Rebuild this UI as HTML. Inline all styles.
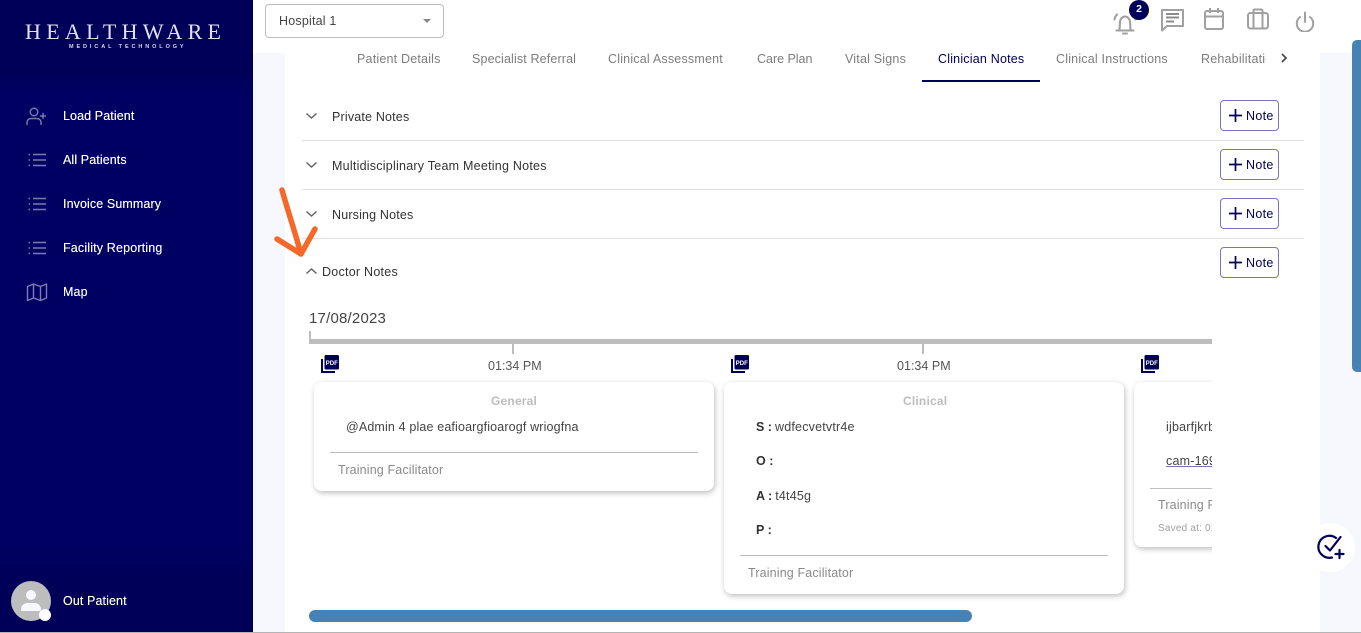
<!DOCTYPE html>
<html><head><meta charset="utf-8"><title>Healthware</title>
<style>
html,body{margin:0;padding:0;width:1361px;height:633px;overflow:hidden;background:#f7f8fd}
body{position:relative;font-family:"Liberation Sans",sans-serif;color:#333}
.a{position:absolute}
.t{position:absolute;white-space:nowrap;font-size:12.5px;line-height:16px;letter-spacing:.2px}
.side{color:#fff;left:63px;font-weight:400;font-size:12.5px;letter-spacing:.1px;text-shadow:0 0 .3px #fff}
.tab{top:51px;color:#7d7d7d}
.hr{position:absolute;left:302px;width:1002px;height:1px;background:#e0e0e0}
.btn{position:absolute;left:1220px;width:57px;height:29px;border:1px solid #7b74b8;border-radius:4px;background:#fff}
.btn span{position:absolute;left:25px;top:7px;font-size:12.5px;line-height:16px;color:#000058;letter-spacing:.3px}
.btn svg{position:absolute;left:8px;top:8px}
.lab{color:#333;letter-spacing:.2px}
.card{position:absolute;background:#fff;border-radius:8px;box-shadow:1px 2px 6px rgba(0,0,0,.26)}
.ct{color:#bdbdbd;font-weight:700;font-size:12px}
.ln{position:absolute;height:1px;background:#bdbdbd}
.gr{color:#8a8a8a;letter-spacing:.15px}
b{letter-spacing:0}
</style></head><body>
<div class="a" style="left:285px;top:53px;width:1035px;height:580px;background:#fff"></div>

<div class="a" style="left:0;top:0;width:253px;height:633px;background:linear-gradient(#000058 0,#000058 70px,#000062 95px,#000062 545px,#000058 580px)"></div>
<div class="t" style="left:25px;top:20px;color:#e2e2f0;font-family:'Liberation Serif',serif;font-size:22px;line-height:24px;letter-spacing:5.3px">HEALTHWARE</div>
<div class="t" style="left:69px;top:44px;color:#d8d8e8;font-size:5.500px;line-height:7px;letter-spacing:2.900px;font-weight:700">MEDICAL TECHNOLOGY</div>

<svg class="a" style="left:26px;top:107px" width="22" height="19" viewBox="0 0 22 19" fill="none" stroke="#7d7cb0" stroke-width="1.400" stroke-linecap="round"><circle cx="8" cy="5" r="3.800"/><path d="M1 17.500v-2.200c0-2.200 1.800-3.800 4-3.800h6c2.200 0 4 1.600 4 3.800v2.200M17 6.500v5M14.500 9h5"/></svg>
<svg class="a" style="left:28px;top:153px" width="19" height="14" viewBox="0 0 19 14" fill="none" stroke="#7d7cb0" stroke-width="1.400"><path d="M5 1.500h13M5 7h13M5 12.500h13"/><path d="M.5 1.500h1.500M.5 7h1.500M.5 12.500h1.500"/></svg>
<svg class="a" style="left:28px;top:197px" width="19" height="14" viewBox="0 0 19 14" fill="none" stroke="#7d7cb0" stroke-width="1.400"><path d="M5 1.500h13M5 7h13M5 12.500h13"/><path d="M.5 1.500h1.500M.5 7h1.500M.5 12.500h1.500"/></svg>
<svg class="a" style="left:28px;top:241px" width="19" height="14" viewBox="0 0 19 14" fill="none" stroke="#7d7cb0" stroke-width="1.400"><path d="M5 1.500h13M5 7h13M5 12.500h13"/><path d="M.5 1.500h1.500M.5 7h1.500M.5 12.500h1.500"/></svg>
<svg class="a" style="left:26px;top:282px" width="22" height="20" viewBox="0 0 22 20" fill="none" stroke="#7d7cb0" stroke-width="1.400" stroke-linejoin="round"><path d="M1.500 4.500l6-2.500 7 2.500 6-2.500v14l-6 2.500-7-2.500-6 2.500zM7.500 2v14M14.500 4.500v14"/></svg>

<div class="t side" style="top:108px">Load Patient</div>
<div class="t side" style="top:152px">All Patients</div>
<div class="t side" style="top:196px">Invoice Summary</div>
<div class="t side" style="top:240px;letter-spacing:.16px">Facility Reporting</div>
<div class="t side" style="top:284px">Map</div>

<div class="a" style="left:11px;top:581px;width:40px;height:40px;border-radius:50%;background:#bdbdbd;overflow:hidden">
<div class="a" style="left:15px;top:9px;width:10px;height:10px;border-radius:50%;background:#f7f8fd"></div>
<div class="a" style="left:10px;top:22px;width:20px;height:8px;border-radius:8px 8px 2px 2px;background:#f7f8fd"></div></div>
<div class="a" style="left:39px;top:609px;width:12px;height:12px;border-radius:50%;background:#fff"></div>
<div class="t side" style="top:593px">Out Patient</div>

<div class="a" style="left:253px;top:0;width:1108px;height:53px;background:#fff"></div>
<div class="a" style="left:265px;top:4px;width:177px;height:32px;border:1px solid #bdbdbd;border-radius:4px;background:#fff"></div>
<div class="t" style="left:279px;top:13px;color:#444">Hospital 1</div>
<div class="a" style="left:423px;top:19px;width:0;height:0;border-left:4.500px solid transparent;border-right:4.500px solid transparent;border-top:4.500px solid #858585"></div>

<svg class="a" style="left:1112px;top:11px" width="26" height="25" viewBox="0 0 26 25" fill="none" stroke="#a0a0a0" stroke-width="2.100" stroke-linecap="round" stroke-linejoin="round"><path d="M4.500 19.500h17M7.500 19.500l.5-8.500c.2-3 2.200-5.500 5-5.500s4.800 2.500 5 5.500l.5 8.500M11 22.500h4M5 3.500C3.500 5 2.700 6.500 2.500 8.500M21 3.500c1.500 1.500 2.300 3 2.500 5"/></svg>
<div class="a" style="left:1129px;top:0;width:20px;height:20px;border-radius:50%;background:#000058;color:#fff;font-size:10.500px;font-weight:700;line-height:19px;text-align:center">2</div>
<svg class="a" style="left:1160px;top:8px" width="25" height="24" viewBox="0 0 25 24" fill="none" stroke="#a0a0a0" stroke-width="2" stroke-linejoin="round"><path d="M2 2h21v16H7l-5 4.500z"/><path d="M6 6h13M6 9.500h13M6 13.500h8" stroke="#8c8c8c"/></svg>
<svg class="a" style="left:1203px;top:7px" width="22" height="23" viewBox="0 0 22 23" fill="none" stroke="#a0a0a0" stroke-width="2" stroke-linejoin="round"><rect x="2" y="4" width="18" height="18" rx="2"/><path d="M2 9.500h18M7 1v5M15 1v5"/></svg>
<svg class="a" style="left:1246px;top:8px" width="24" height="22" viewBox="0 0 24 22" fill="none" stroke="#a0a0a0" stroke-width="2" stroke-linejoin="round"><rect x="2" y="5" width="20" height="15.500" rx="2.500"/><path d="M7.500 20.500V3c0-.8.5-1.500 1.500-1.500h6c1 0 1.500.7 1.500 1.500v17.500"/></svg>
<svg class="a" style="left:1295px;top:11px" width="20" height="21" viewBox="0 0 20 21" fill="none" stroke="#a0a0a0" stroke-width="2" stroke-linecap="round"><path d="M10 1.500v9.500M5 6a8.200 8.200 0 1 0 10 0"/></svg>

<div class="t tab" style="left:357px">Patient Details</div>
<div class="t tab" style="left:472px;letter-spacing:.14px">Specialist Referral</div>
<div class="t tab" style="left:608px">Clinical Assessment</div>
<div class="t tab" style="left:757px;letter-spacing:-.02px">Care Plan</div>
<div class="t tab" style="left:845px">Vital Signs</div>
<div class="t tab" style="left:938px;color:#000058">Clinician Notes</div>
<div class="t tab" style="left:1056px">Clinical Instructions</div>
<div class="a" style="left:1201px;top:51px;width:65px;height:16px;overflow:hidden"><div class="t tab" style="left:0;top:0">Rehabilitation</div></div>
<svg class="a" style="left:1279px;top:52px" width="10" height="12" viewBox="0 0 10 12" fill="none" stroke="#444" stroke-width="1.600"><path d="M3 2l4 4-4 4"/></svg>
<div class="a" style="left:922px;top:80px;width:118px;height:2px;background:#000058"></div>

<svg class="a" style="left:305px;top:112px" width="13" height="8" viewBox="0 0 13 8" fill="none" stroke="#666" stroke-width="1.500"><path d="M1.500 1.500l5 4.500 5-4.500"/></svg>
<div class="t lab" style="left:332px;top:109px;letter-spacing:.18px">Private Notes</div>
<div class="btn" style="top:100px"><svg width="13" height="13" viewBox="0 0 13 13" stroke="#000058" stroke-width="1.700"><path d="M6.500 0v13M0 6.500h13"/></svg><span>Note</span></div>
<div class="hr" style="top:140px"></div>

<svg class="a" style="left:305px;top:161px" width="13" height="8" viewBox="0 0 13 8" fill="none" stroke="#666" stroke-width="1.500"><path d="M1.500 1.500l5 4.500 5-4.500"/></svg>
<div class="t lab" style="left:332px;top:158px;letter-spacing:.24px">Multidisciplinary Team Meeting Notes</div>
<div class="btn" style="top:149px"><svg width="13" height="13" viewBox="0 0 13 13" stroke="#000058" stroke-width="1.700"><path d="M6.500 0v13M0 6.500h13"/></svg><span>Note</span></div>
<div class="hr" style="top:189px"></div>

<svg class="a" style="left:305px;top:210px" width="13" height="8" viewBox="0 0 13 8" fill="none" stroke="#666" stroke-width="1.500"><path d="M1.500 1.500l5 4.500 5-4.500"/></svg>
<div class="t lab" style="left:332px;top:207px;letter-spacing:.17px">Nursing Notes</div>
<div class="btn" style="top:198px"><svg width="13" height="13" viewBox="0 0 13 13" stroke="#000058" stroke-width="1.700"><path d="M6.500 0v13M0 6.500h13"/></svg><span>Note</span></div>
<div class="hr" style="top:238px"></div>

<svg class="a" style="left:305px;top:267px" width="13" height="8" viewBox="0 0 13 8" fill="none" stroke="#666" stroke-width="1.500"><path d="M1.500 6.500l5-4.500 5 4.500"/></svg>
<div class="t lab" style="left:322px;top:264px;letter-spacing:.25px">Doctor Notes</div>
<div class="btn" style="top:247px"><svg width="13" height="13" viewBox="0 0 13 13" stroke="#000058" stroke-width="1.700"><path d="M6.500 0v13M0 6.500h13"/></svg><span>Note</span></div>

<svg class="a" style="left:270px;top:185px" width="55" height="75" viewBox="0 0 55 75" fill="none" stroke="#f4682a" stroke-width="5.500" stroke-linecap="round" stroke-linejoin="round"><path d="M12 5c5 18 13 42 19 64M7 54l24 15 14-25"/></svg>

<div class="t" style="left:309px;top:310px;font-size:15px;line-height:18px;letter-spacing:.2px;color:#444">17/08/2023</div>

<div class="a" style="left:309px;top:331px;width:903px;height:302px;overflow:hidden">
  <div class="a" style="left:0;top:8px;width:903px;height:5px;background:#bdbdbd"></div>
  <div class="a" style="left:0;top:0;width:2px;height:10px;background:#bdbdbd"></div>
  <div class="a" style="left:203px;top:13px;width:2px;height:10px;background:#bdbdbd"></div>
  <div class="a" style="left:613px;top:13px;width:2px;height:10px;background:#bdbdbd"></div>
  <div class="t" style="left:179px;top:27px;color:#555;letter-spacing:.02px">01:34 PM</div>
  <div class="t" style="left:588px;top:27px;color:#555;letter-spacing:.02px">01:34 PM</div>

  <svg class="a" style="left:12px;top:24px" width="18" height="18" viewBox="0 0 18 18"><rect x="3.500" y="0" width="14.500" height="14.500" rx="1.500" fill="#000058"/><path d="M1 4v13h13" fill="none" stroke="#000058" stroke-width="2"/><text x="10.800" y="9.800" font-family="Liberation Sans" font-size="6" font-weight="700" fill="#fff" text-anchor="middle">PDF</text></svg>
  <svg class="a" style="left:422px;top:24px" width="18" height="18" viewBox="0 0 18 18"><rect x="3.500" y="0" width="14.500" height="14.500" rx="1.500" fill="#000058"/><path d="M1 4v13h13" fill="none" stroke="#000058" stroke-width="2"/><text x="10.800" y="9.800" font-family="Liberation Sans" font-size="6" font-weight="700" fill="#fff" text-anchor="middle">PDF</text></svg>
  <svg class="a" style="left:832px;top:24px" width="18" height="18" viewBox="0 0 18 18"><rect x="3.500" y="0" width="14.500" height="14.500" rx="1.500" fill="#000058"/><path d="M1 4v13h13" fill="none" stroke="#000058" stroke-width="2"/><text x="10.800" y="9.800" font-family="Liberation Sans" font-size="6" font-weight="700" fill="#fff" text-anchor="middle">PDF</text></svg>

  <div class="card" style="left:5px;top:51px;width:400px;height:109px">
    <div class="t ct" style="left:177px;top:11px">General</div>
    <div class="t" style="left:32px;top:37px;color:#444;letter-spacing:.15px">@Admin 4 plae eafioargfioarogf wriogfna</div>
    <div class="ln" style="left:16px;top:70px;width:368px"></div>
    <div class="t gr" style="left:24px;top:80px">Training Facilitator</div>
  </div>

  <div class="card" style="left:415px;top:51px;width:400px;height:212px">
    <div class="t ct" style="left:179px;top:11px">Clinical</div>
    <div class="t" style="left:32px;top:37px;color:#444"><b style="color:#333">S :</b><span style="margin-left:3px">wdfecvetvtr4e</span></div>
    <div class="t" style="left:32px;top:71px"><b>O :</b></div>
    <div class="t" style="left:32px;top:106px;color:#444"><b style="color:#333">A :</b><span style="margin-left:3px">t4t45g</span></div>
    <div class="t" style="left:32px;top:140px"><b>P :</b></div>
    <div class="ln" style="left:16px;top:173px;width:368px"></div>
    <div class="t gr" style="left:24px;top:183px">Training Facilitator</div>
  </div>

  <div class="card" style="left:825px;top:51px;width:400px;height:165px">
    <div class="t" style="left:32px;top:37px;color:#444">ijbarfjkrbf</div>
    <div class="t" style="left:32px;top:71px;color:#444;text-decoration:underline;text-decoration-color:#7b74b8">cam-1692</div>
    <div class="ln" style="left:16px;top:106px;width:368px"></div>
    <div class="t gr" style="left:24px;top:115px">Training Facilitator</div>
    <div class="t" style="left:24px;top:139px;font-size:10px;color:#a0a0a0">Saved at: 01:34 PM</div>
  </div>

  <div class="a" style="left:0;top:279px;width:663px;height:12px;border-radius:6px;background:#4682b4"></div>
</div>

<div class="a" style="left:1352px;top:40px;width:9px;height:332px;border-radius:5px 0 0 5px;background:#4682b4"></div>

<div class="a" style="left:1306px;top:523px;width:49px;height:49px;border-radius:50%;background:#fff"></div>
<svg class="a" style="left:1317px;top:534px" width="30" height="26" viewBox="0 0 30 26" fill="none" stroke="#000058" stroke-width="2.200" stroke-linecap="round" stroke-linejoin="round"><path d="M19 4A11 11 0 1 0 15 23.500M8.500 12l4.500 4.500 10.500-13.500M22.500 16v8M18.500 20h8"/></svg>

<div class="a" style="left:0;top:632px;width:1361px;height:1px;background:#b4b4b4"></div>
</body></html>
